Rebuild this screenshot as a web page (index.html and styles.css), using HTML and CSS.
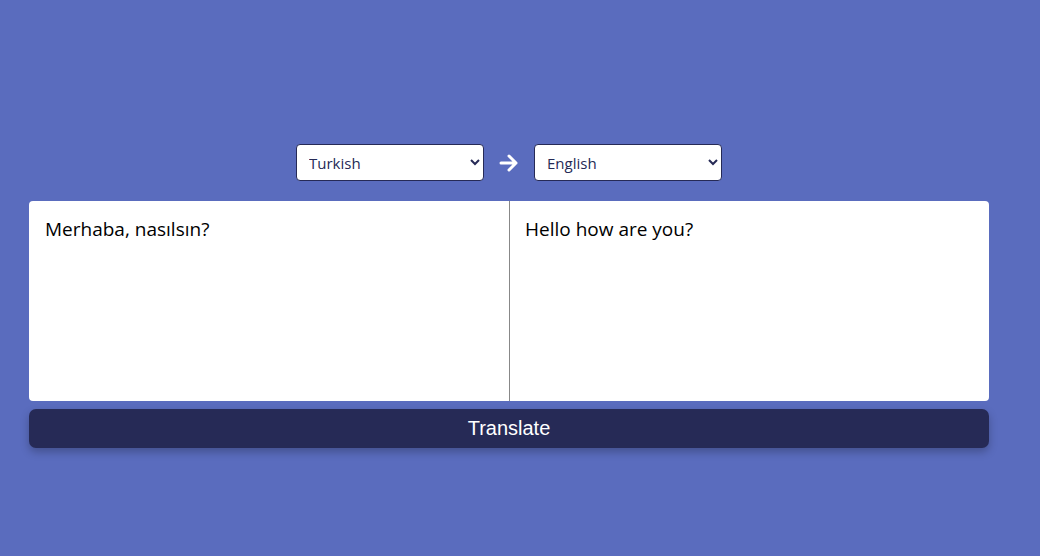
FILE: index.html
```html
<!DOCTYPE html>
<html>
<head>
<meta charset="utf-8">
<link rel="stylesheet" href="styles.css">
</head>
<body>
<div class="container">
  <div class="lang-row">
    <select class="lang-select">
      <option>Turkish</option>
    </select>
    <svg class="arrow" width="20" height="18" viewBox="0 0 20 18">
      <path d="M2 9 H17 M10 2 L17 9 L10 16" fill="none" stroke="#fff" stroke-width="3" stroke-linecap="round" stroke-linejoin="round"/>
    </svg>
    <select class="lang-select">
      <option>English</option>
    </select>
  </div>
  <div class="text-row">
    <textarea class="text-box text-left" spellcheck="true">Merhaba, nasılsın?</textarea>
    <textarea class="text-box text-right" readonly>Hello how are you?</textarea>
  </div>
  <button class="translate-btn">Translate</button>
</div>
</body>
</html>
```
FILE: styles.css
```css
html, body {
  margin: 0;
  padding: 0;
}
body {
  background: #5a6cbe;
  width: 1040px;
  height: 556px;
  overflow: hidden;
}
.container {
  width: 960px;
  margin-left: 29px;
  padding-top: 144px;
  display: flex;
  flex-direction: column;
}
.lang-row {
  display: flex;
  justify-content: center;
  align-items: center;
  gap: 15px;
  height: 37px;
}
.lang-select {
  width: 188px;
  height: 37px;
  border: 1px solid #262a56;
  border-radius: 4px;
  background: #fff;
  color: #262a56;
  font-family: "Open Sans", "Noto Sans", sans-serif;
  font-size: 15px;
  padding: 0 8px;
}
.arrow {
  display: block;
}
.text-row {
  display: flex;
  margin-top: 20px;
  height: 200px;
}
.text-box {
  flex: 1;
  height: 200px;
  box-sizing: border-box;
  border: none;
  resize: none;
  outline: none;
  background: #fff;
  font-family: "Open Sans", "Noto Sans", sans-serif;
  font-size: 19px;
  color: #000;
  padding: 15px 16px;
  margin: 0;
}
.text-left {
  border-radius: 4px 0 0 4px;
  border-right: 1px solid #888;
  padding-left: 16px;
}
.text-right {
  border-radius: 0 4px 4px 0;
  padding-left: 15px;
}
.translate-btn {
  margin-top: 8px;
  height: 39px;
  border: none;
  border-radius: 7px;
  background: #262a56;
  color: #fff;
  font-family: "Liberation Sans", Arial, sans-serif;
  font-size: 20px;
  box-shadow: 0 4px 8px rgba(0, 0, 0, 0.25);
  padding: 0;
}
```
